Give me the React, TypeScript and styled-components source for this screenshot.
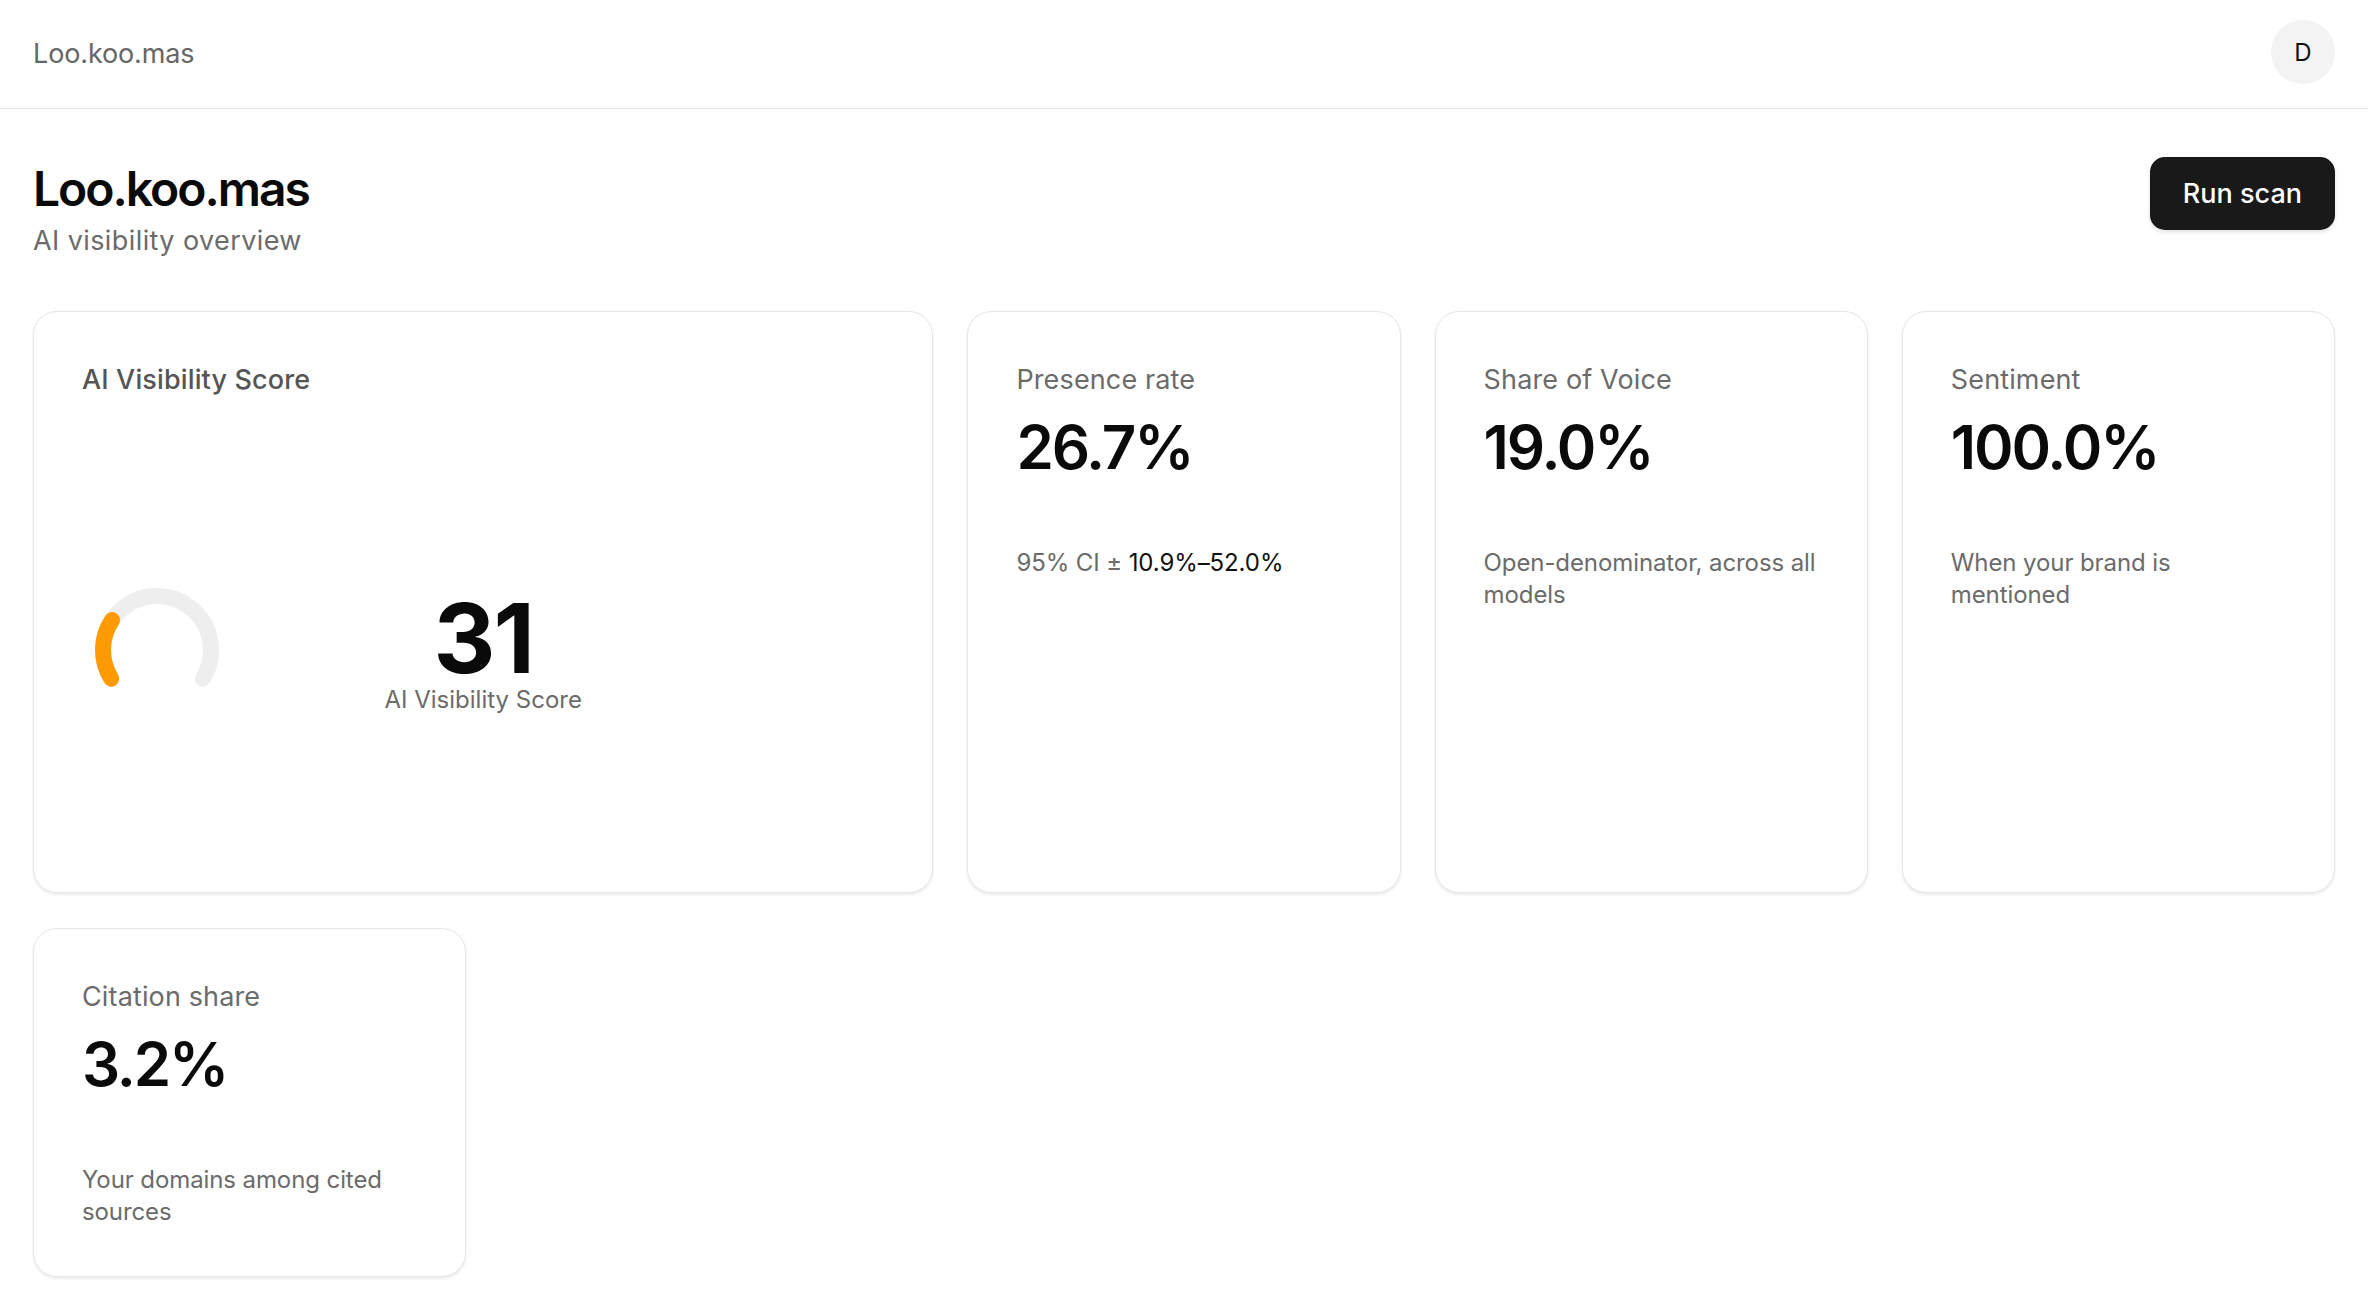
import styled, { createGlobalStyle } from "styled-components";

const GlobalStyle = createGlobalStyle`
  * { box-sizing: border-box; }
  body {
    margin: 0;
    background: #ffffff;
    font-family: Inter, "Noto Sans", "Liberation Sans", sans-serif;
    color: #0a0a0a;
    -webkit-font-smoothing: antialiased;
  }
`;

const TopBar = styled.header`
  height: 109px;
  padding: 0 33px;
  display: flex;
  align-items: center;
  justify-content: space-between;
  border-bottom: 1px solid #e4e4e4;
`;

const Brand = styled.span`
  font-size: 27px;
  color: #666666;
  letter-spacing: -0.005em;
  margin-top: -2px;
`;

const Avatar = styled.div`
  width: 64px;
  height: 64px;
  border-radius: 50%;
  background: #f3f3f3;
  display: flex;
  align-items: center;
  justify-content: center;
  font-size: 24px;
  color: #111111;
  margin-top: -4px;
`;

const Main = styled.main`
  padding: 48px 33px 40px;
`;

const PageHead = styled.div`
  display: flex;
  justify-content: space-between;
  align-items: flex-start;
  margin-bottom: 50px;
`;

const Title = styled.h1`
  margin: 0;
  font-size: 48px;
  line-height: 64px;
  font-weight: 600;
  letter-spacing: -0.042em;
  color: #0a0a0a;
`;

const Subtitle = styled.p`
  margin: 0;
  font-size: 27px;
  line-height: 40px;
  color: #6b6b6b;
  letter-spacing: 0.015em;
`;

const RunButton = styled.button`
  height: 73px;
  padding: 0 33px;
  border: none;
  border-radius: 15px;
  background: #191919;
  color: #ffffff;
  font-family: inherit;
  font-size: 27px;
  font-weight: 500;
  cursor: pointer;
  box-shadow: 0 2px 4px rgba(0, 0, 0, 0.12);
`;

const Grid = styled.div`
  display: grid;
  grid-template-columns: repeat(5, 1fr);
  gap: 35px 34px;
`;

const Card = styled.section<{ $span?: number }>`
  grid-column: span ${(p) => p.$span ?? 1};
  display: flex;
  flex-direction: column;
  padding: 48px;
  background: #ffffff;
  border: 1px solid #e6e6e6;
  border-radius: 24px;
  box-shadow: 0 2px 3px rgba(0, 0, 0, 0.08);
`;

const Label = styled.div<{ $strong?: boolean }>`
  font-size: 27px;
  line-height: 40px;
  font-weight: ${(p) => (p.$strong ? 500 : 400)};
  color: ${(p) => (p.$strong ? "#555555" : "#6b6b6b")};
  letter-spacing: 0.005em;
`;

const Value = styled.div`
  margin-top: 11px;
  font-size: 60px;
  line-height: 72px;
  font-weight: 600;
  letter-spacing: -0.035em;
  color: #0a0a0a;
`;

const Note = styled.p`
  margin: 64px 0 0;
  font-size: 24px;
  line-height: 32px;
  color: #6b6b6b;
  letter-spacing: -0.004em;
`;

const Strong = styled.span`
  color: #111111;
`;

const GaugeArea = styled.div`
  flex: 1;
  min-height: 444px;
  padding-top: 40px;
  display: grid;
  grid-template-columns: 1fr auto 1fr;
  align-items: center;
`;

const GaugeSvg = styled.svg`
  justify-self: start;
  display: block;
`;

const ScoreBlock = styled.div`
  display: flex;
  flex-direction: column;
  align-items: center;
  padding: 28px 0 8px;
`;

const ScoreNumber = styled.div`
  font-size: 96px;
  line-height: 96px;
  font-weight: 700;
  letter-spacing: -0.02em;
  color: #0a0a0a;
`;

const ScoreCaption = styled.div`
  font-size: 24px;
  line-height: 28px;
  color: #6b6b6b;
`;

const cx = 75;
const cy = 64;
const r = 54;

const pt = (deg: number) => {
  const a = (deg * Math.PI) / 180;
  return [cx + r * Math.cos(a), cy - r * Math.sin(a)];
};

const arc = (from: number, to: number) => {
  const [x1, y1] = pt(from);
  const [x2, y2] = pt(to);
  const large = from - to > 180 ? 1 : 0;
  return `M ${x1} ${y1} A ${r} ${r} 0 ${large} 1 ${x2} ${y2}`;
};

const Gauge = ({ score }: { score: number }) => {
  const start = 212;
  const end = -32;
  const sweep = start - end;
  const stop = start - sweep * (score / 100) + 10;
  return (
    <GaugeSvg width="150" height="112" viewBox="0 0 150 112">
      <path d={arc(start, end)} fill="none" stroke="#eeeeee" strokeWidth="16" strokeLinecap="round" />
      <path d={arc(start, stop)} fill="none" stroke="#ff9a00" strokeWidth="16" strokeLinecap="round" />
    </GaugeSvg>
  );
};

const metrics = [
  { label: "Share of Voice", value: "19.0%", note: "Open-denominator, across all models" },
  { label: "Sentiment", value: "100.0%", note: "When your brand is mentioned" },
  { label: "Citation share", value: "3.2%", note: "Your domains among cited sources" },
];

export default function App() {
  return (
    <>
      <GlobalStyle />
      <TopBar>
        <Brand>Loo.koo.mas</Brand>
        <Avatar>D</Avatar>
      </TopBar>
      <Main>
        <PageHead>
          <div>
            <Title>Loo.koo.mas</Title>
            <Subtitle>AI visibility overview</Subtitle>
          </div>
          <RunButton>Run scan</RunButton>
        </PageHead>
        <Grid>
          <Card $span={2}>
            <Label $strong>AI Visibility Score</Label>
            <GaugeArea>
              <Gauge score={31} />
              <ScoreBlock>
                <ScoreNumber>31</ScoreNumber>
                <ScoreCaption>AI Visibility Score</ScoreCaption>
              </ScoreBlock>
            </GaugeArea>
          </Card>
          <Card>
            <Label>Presence rate</Label>
            <Value>26.7%</Value>
            <Note>
              95% CI ± <Strong>10.9%–52.0%</Strong>
            </Note>
          </Card>
          {metrics.map((m) => (
            <Card key={m.label}>
              <Label>{m.label}</Label>
              <Value>{m.value}</Value>
              <Note>{m.note}</Note>
            </Card>
          ))}
        </Grid>
      </Main>
    </>
  );
}
